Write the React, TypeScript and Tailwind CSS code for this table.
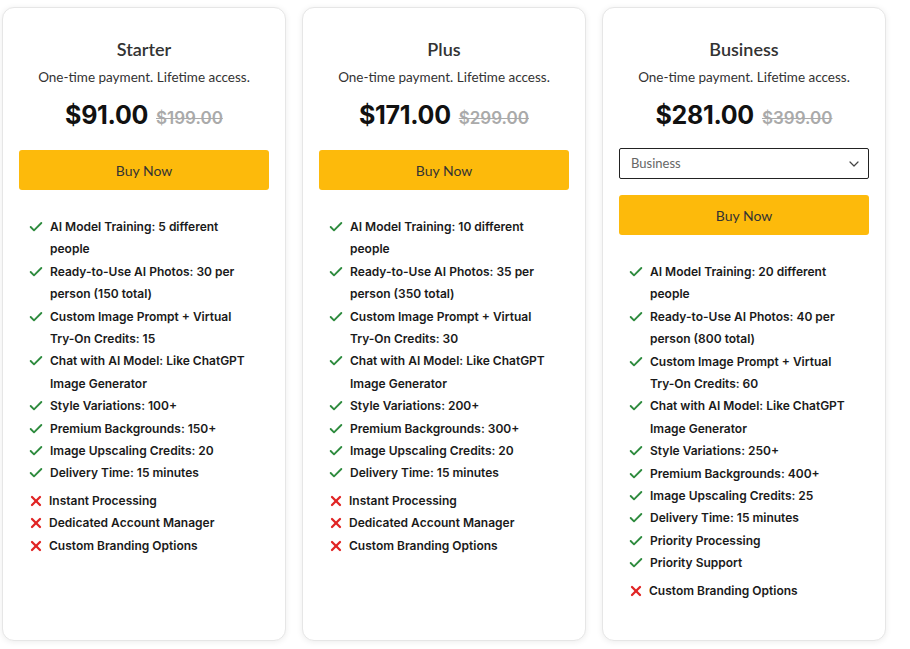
import { Check, X, ChevronDown } from "lucide-react";

type Plan = {
  name: string;
  price: string;
  was: string;
  select?: boolean;
  yes: string[][];
  no: string[];
};

const PLANS: Plan[] = [
  {
    name: "Starter",
    price: "$91.00",
    was: "$199.00",
    yes: [
      ["AI Model Training: 5 different", "people"],
      ["Ready-to-Use AI Photos: 30 per", "person (150 total)"],
      ["Custom Image Prompt + Virtual", "Try-On Credits: 15"],
      ["Chat with AI Model: Like ChatGPT", "Image Generator"],
      ["Style Variations: 100+"],
      ["Premium Backgrounds: 150+"],
      ["Image Upscaling Credits: 20"],
      ["Delivery Time: 15 minutes"],
    ],
    no: ["Instant Processing", "Dedicated Account Manager", "Custom Branding Options"],
  },
  {
    name: "Plus",
    price: "$171.00",
    was: "$299.00",
    yes: [
      ["AI Model Training: 10 different", "people"],
      ["Ready-to-Use AI Photos: 35 per", "person (350 total)"],
      ["Custom Image Prompt + Virtual", "Try-On Credits: 30"],
      ["Chat with AI Model: Like ChatGPT", "Image Generator"],
      ["Style Variations: 200+"],
      ["Premium Backgrounds: 300+"],
      ["Image Upscaling Credits: 20"],
      ["Delivery Time: 15 minutes"],
    ],
    no: ["Instant Processing", "Dedicated Account Manager", "Custom Branding Options"],
  },
  {
    name: "Business",
    price: "$281.00",
    was: "$399.00",
    select: true,
    yes: [
      ["AI Model Training: 20 different", "people"],
      ["Ready-to-Use AI Photos: 40 per", "person (800 total)"],
      ["Custom Image Prompt + Virtual", "Try-On Credits: 60"],
      ["Chat with AI Model: Like ChatGPT", "Image Generator"],
      ["Style Variations: 250+"],
      ["Premium Backgrounds: 400+"],
      ["Image Upscaling Credits: 25"],
      ["Delivery Time: 15 minutes"],
      ["Priority Processing"],
      ["Priority Support"],
    ],
    no: ["Custom Branding Options"],
  },
];

function PlanCard({ plan }: { plan: Plan }) {
  return (
    <div className="w-[284px] h-[634px] shrink-0 rounded-xl bg-white border border-[#e6e6e6] shadow-[0_1px_6px_rgba(0,0,0,0.08)] px-4 pt-[28px]">
      <div className="text-center font-['Lato',sans-serif] text-[#333]">
        <h2 className="text-[18px] leading-[26px] font-semibold">{plan.name}</h2>
        <p className="mt-[5px] text-[13.5px] leading-[20px]">One-time payment. Lifetime access.</p>
      </div>
      <div className="mt-[10px] flex items-baseline justify-center gap-[8px] font-['Inter',sans-serif]">
        <span className="text-[25px] leading-[36px] font-bold text-[#111] tracking-[-0.3px]">{plan.price}</span>
        <span className="text-[17px] font-semibold text-[#aaa] line-through">{plan.was}</span>
      </div>
      {plan.select && (
        <div className="mt-[15px] h-[31px] border border-[#222] rounded-[2px] flex items-center justify-between pl-[11px] pr-[6px] font-['Lato',sans-serif] text-[13px] text-[#666]">
          <span>Business</span>
          <ChevronDown className="size-[16px] text-[#444]" strokeWidth={1.8} />
        </div>
      )}
      <button
        className={`${plan.select ? "mt-[16px]" : "mt-[17px]"} w-full h-[40px] rounded-[3px] bg-[#fdba0b] font-['Lato',sans-serif] text-[14px] text-[#333]`}
      >
        Buy Now
      </button>
      <ul className="mt-[26px] pl-[9px] font-['Inter',sans-serif] text-[12px] font-semibold text-[#1a1a1a] leading-[22.4px]">
        {plan.yes.map((lines, i) => (
          <li key={i} className="flex gap-[6px]">
            <Check className="size-[16px] mt-[3px] shrink-0 text-[#2e8b3e]" strokeWidth={2.8} />
            <span className="whitespace-nowrap">
              {lines.map((l, j) => (
                <span key={j} className="block">
                  {l}
                </span>
              ))}
            </span>
          </li>
        ))}
      </ul>
      <ul className="mt-[5px] pl-[9px] font-['Inter',sans-serif] text-[12px] font-semibold text-[#1a1a1a] leading-[22.4px]">
        {plan.no.map((t, i) => (
          <li key={i} className="flex gap-[5px]">
            <X className="size-[16px] mt-[3px] shrink-0 text-[#e02424]" strokeWidth={3.4} />
            <span className="whitespace-nowrap">{t}</span>
          </li>
        ))}
      </ul>
    </div>
  );
}

export default function App() {
  return (
    <div className="w-[910px] h-[649px] bg-white overflow-hidden">
      <div className="flex gap-[16px] pl-[2px] pt-[7px]">
        {PLANS.map((p) => (
          <PlanCard key={p.name} plan={p} />
        ))}
      </div>
    </div>
  );
}
